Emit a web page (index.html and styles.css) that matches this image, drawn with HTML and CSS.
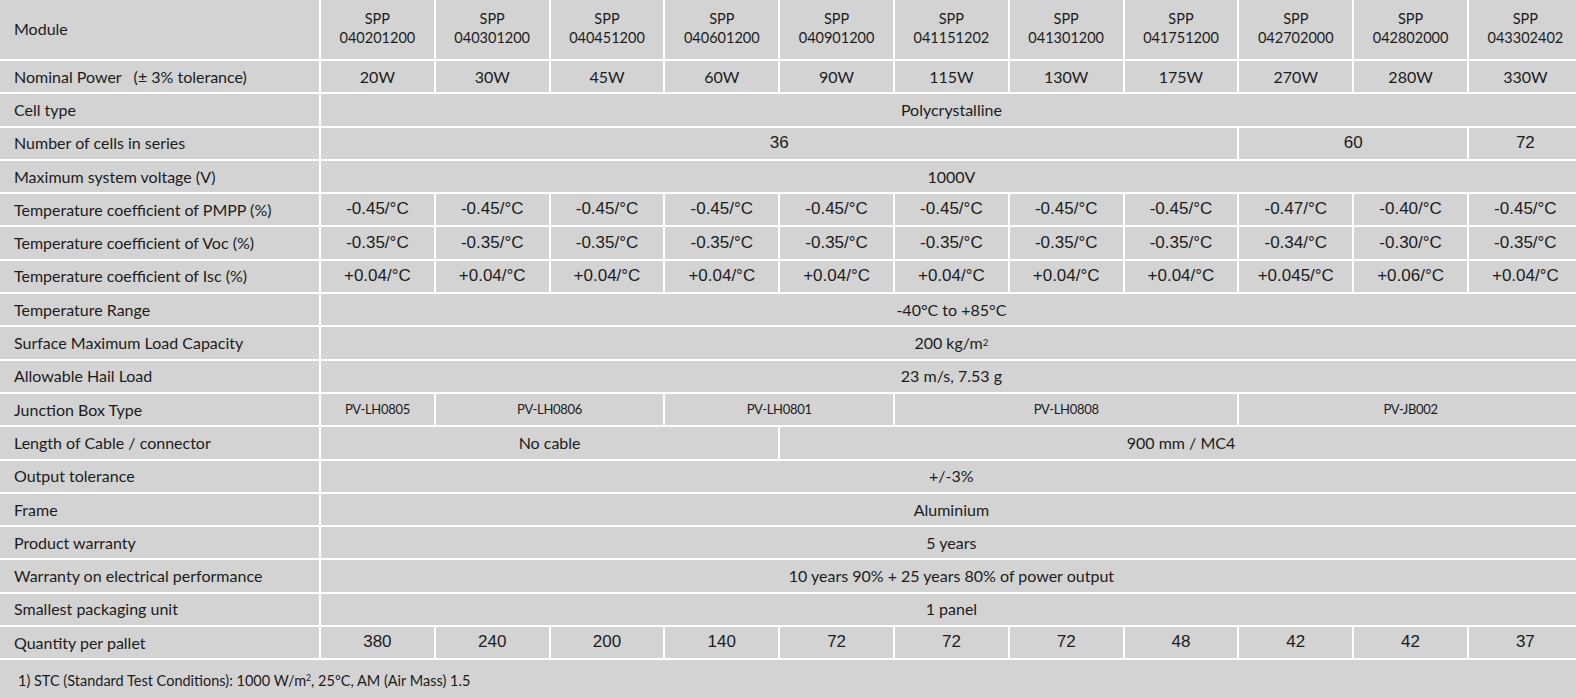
FILE: index.html
```html
<!DOCTYPE html>
<html>
<head>
<meta charset="utf-8">
<link rel="stylesheet" href="styles.css">
</head>
<body>
<div class="sheet">
  <div class="grid">
    <div class="label head">Module</div>
    <div class="cell head">SPP<br>040201200</div>
    <div class="cell head">SPP<br>040301200</div>
    <div class="cell head">SPP<br>040451200</div>
    <div class="cell head">SPP<br>040601200</div>
    <div class="cell head">SPP<br>040901200</div>
    <div class="cell head">SPP<br>041151202</div>
    <div class="cell head">SPP<br>041301200</div>
    <div class="cell head">SPP<br>041751200</div>
    <div class="cell head">SPP<br>042702000</div>
    <div class="cell head">SPP<br>042802000</div>
    <div class="cell head">SPP<br>043302402</div>

    <div class="label">Nominal Power &nbsp; (± 3% tolerance)</div>
    <div class="cell">20W</div><div class="cell">30W</div><div class="cell">45W</div><div class="cell">60W</div><div class="cell">90W</div><div class="cell">115W</div><div class="cell">130W</div><div class="cell">175W</div><div class="cell">270W</div><div class="cell">280W</div><div class="cell">330W</div>

    <div class="label">Cell type</div>
    <div class="cell span-11">Polycrystalline</div>

    <div class="label">Number of cells in series</div>
    <div class="cell num span-8">36</div>
    <div class="cell num span-2">60</div>
    <div class="cell num">72</div>

    <div class="label">Maximum system voltage (V)</div>
    <div class="cell span-11">1000V</div>

    <div class="label">Temperature coefficient of PMPP (%)</div>
    <div class="cell num">-0.45/°C</div><div class="cell num">-0.45/°C</div><div class="cell num">-0.45/°C</div><div class="cell num">-0.45/°C</div><div class="cell num">-0.45/°C</div><div class="cell num">-0.45/°C</div><div class="cell num">-0.45/°C</div><div class="cell num">-0.45/°C</div><div class="cell num">-0.47/°C</div><div class="cell num">-0.40/°C</div><div class="cell num">-0.45/°C</div>

    <div class="label">Temperature coefficient of Voc (%)</div>
    <div class="cell num">-0.35/°C</div><div class="cell num">-0.35/°C</div><div class="cell num">-0.35/°C</div><div class="cell num">-0.35/°C</div><div class="cell num">-0.35/°C</div><div class="cell num">-0.35/°C</div><div class="cell num">-0.35/°C</div><div class="cell num">-0.35/°C</div><div class="cell num">-0.34/°C</div><div class="cell num">-0.30/°C</div><div class="cell num">-0.35/°C</div>

    <div class="label">Temperature coefficient of Isc (%)</div>
    <div class="cell num">+0.04/°C</div><div class="cell num">+0.04/°C</div><div class="cell num">+0.04/°C</div><div class="cell num">+0.04/°C</div><div class="cell num">+0.04/°C</div><div class="cell num">+0.04/°C</div><div class="cell num">+0.04/°C</div><div class="cell num">+0.04/°C</div><div class="cell num">+0.045/°C</div><div class="cell num">+0.06/°C</div><div class="cell num">+0.04/°C</div>

    <div class="label">Temperature Range</div>
    <div class="cell span-11">-40°C to +85°C</div>

    <div class="label">Surface Maximum Load Capacity</div>
    <div class="cell span-11">200 kg/m<sup>2</sup></div>

    <div class="label">Allowable Hail Load</div>
    <div class="cell span-11">23 m/s, 7.53 g</div>

    <div class="label">Junction Box Type</div>
    <div class="cell small">PV-LH0805</div>
    <div class="cell small span-2">PV-LH0806</div>
    <div class="cell small span-2">PV-LH0801</div>
    <div class="cell small span-3">PV-LH0808</div>
    <div class="cell small span-3">PV-JB002</div>

    <div class="label">Length of Cable / connector</div>
    <div class="cell span-4">No cable</div>
    <div class="cell span-7">900 mm / MC4</div>

    <div class="label">Output tolerance</div>
    <div class="cell span-11">+/-3%</div>

    <div class="label">Frame</div>
    <div class="cell span-11">Aluminium</div>

    <div class="label">Product warranty</div>
    <div class="cell span-11">5 years</div>

    <div class="label">Warranty on electrical performance</div>
    <div class="cell span-11">10 years 90% + 25 years 80% of power output</div>

    <div class="label">Smallest packaging unit</div>
    <div class="cell span-11">1 panel</div>

    <div class="label">Quantity per pallet</div>
    <div class="cell num">380</div><div class="cell num">240</div><div class="cell num">200</div><div class="cell num">140</div><div class="cell num">72</div><div class="cell num">72</div><div class="cell num">72</div><div class="cell num">48</div><div class="cell num">42</div><div class="cell num">42</div><div class="cell num">37</div>
  </div>
  <div class="footnote">1) STC (Standard Test Conditions): 1000 W/m<sup>2</sup>, 25ºC, AM (Air Mass) 1.5</div>
</div>
</body>
</html>
```

FILE: styles.css
```css
html, body {
  margin: 0;
  padding: 0;
  background: #d3d3d3;
  overflow: hidden;
}

.sheet {
  width: 1582px;
  background: #d3d3d3;
  color: #1c1c1c;
  font-family: Lato, "Liberation Sans", sans-serif;
}

.grid {
  display: grid;
  grid-template-columns: 319px repeat(11, 112.8px);
  grid-template-rows: 59px;
  grid-auto-rows: 31.3px;
  gap: 2px;
  background: #ffffff;
  border-bottom: 2px solid #ffffff;
}

.label,
.cell {
  background: #d3d3d3;
  display: flex;
  align-items: center;
  font-size: 16px;
  white-space: nowrap;
  padding-bottom: 1px;
  box-sizing: border-box;
}

.label {
  padding-left: 14px;
}

.cell {
  justify-content: center;
  text-align: center;
}

.head {
  line-height: 19px;
  font-size: 14.5px;
  padding-bottom: 3px;
}

.label.head {
  font-size: 16px;
}

.num {
  font-family: "Liberation Sans", Arial, sans-serif;
  font-size: 17px;
}

.small {
  font-size: 13px;
  letter-spacing: -0.3px;
}

.span-2 { grid-column: span 2; }
.span-3 { grid-column: span 3; }
.span-4 { grid-column: span 4; }
.span-7 { grid-column: span 7; }
.span-8 { grid-column: span 8; }
.span-11 { grid-column: span 11; }

sup {
  font-size: 0.6em;
  line-height: 0;
  vertical-align: 0.55em;
}

.footnote {
  font-size: 14.5px;
  padding: 12px 0 0 18px;
  height: 28px;
}
```
